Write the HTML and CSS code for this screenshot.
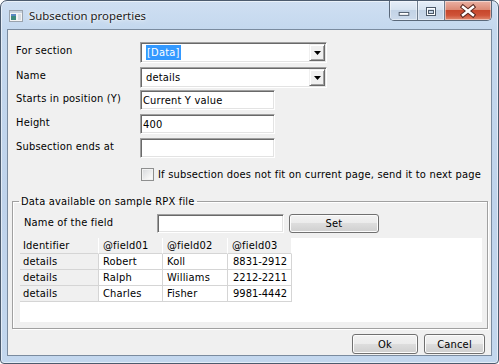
FILE: index.html
```html
<!DOCTYPE html>
<html>
<head>
<meta charset="utf-8">
<link rel="stylesheet" href="styles.css">
</head>
<body>
<div class="window">
  <div class="titlebar">
    <div class="title">
      <svg class="appicon" width="16" height="16" viewBox="0 0 16 16">
        <rect x="1.5" y="2.5" width="13" height="11" fill="#f4f4f4" stroke="#9aa3ad"/>
        <rect x="2" y="3" width="12" height="2" fill="#c9d3de"/>
        <rect x="3" y="6" width="5" height="6" fill="#3d8a7c"/>
        <rect x="3" y="6" width="5" height="2" fill="#5a88c4"/>
        <rect x="10" y="6" width="3" height="6" fill="#d7dde3"/>
      </svg>
      <span class="title-text">Subsection properties</span>
    </div>
    <div class="caption-btns">
      <div class="cbtn cmin">
        <svg width="28" height="18" viewBox="0 0 28 18"><rect x="9.5" y="10.5" width="10" height="3" fill="#fff" stroke="#4b5868"/></svg>
      </div>
      <div class="cbtn cmax">
        <svg width="26" height="18" viewBox="0 0 26 18"><rect x="8.5" y="5.5" width="9" height="8" fill="none" stroke="#4b5868" stroke-width="1"/><rect x="9.5" y="6.5" width="7" height="6" fill="none" stroke="#fff"/><rect x="10.5" y="8.5" width="5" height="3" fill="none" stroke="#4b5868"/></svg>
      </div>
      <div class="cbtn cclose">
        <svg width="46" height="18" viewBox="0 0 46 18"><path d="M18 5 L28 13 M28 5 L18 13" stroke="#5b2a22" stroke-width="4.5" stroke-linecap="square"/><path d="M18 5 L28 13 M28 5 L18 13" stroke="#fff" stroke-width="2.4" stroke-linecap="square"/></svg>
      </div>
    </div>
  </div>
  <div class="client">
    <div class="form">
      <div class="row row-combo">
        <span class="lbl">For section</span>
        <div class="combo"><span class="combo-text"><span class="sel">[Data]</span></span><span class="drop"><svg width="7" height="4" viewBox="0 0 7 4"><path d="M0 0 H7 L3.5 4 Z" fill="#000"/></svg></span></div>
      </div>
      <div class="row row-combo gap4">
        <span class="lbl">Name</span>
        <div class="combo"><span class="combo-text">details</span><span class="drop"><svg width="7" height="4" viewBox="0 0 7 4"><path d="M0 0 H7 L3.5 4 Z" fill="#000"/></svg></span></div>
      </div>
      <div class="row row-text gap2">
        <span class="lbl">Starts in position (Y)</span>
        <div class="textbox">Current Y value</div>
      </div>
      <div class="row row-text gap4">
        <span class="lbl">Height</span>
        <div class="textbox">400</div>
      </div>
      <div class="row row-text gap4">
        <span class="lbl">Subsection ends at</span>
        <div class="textbox"></div>
      </div>
    </div>
    <div class="check-row">
      <span class="checkbox"></span>
      <span class="check-label">If subsection does not fit on current page, send it to next page</span>
    </div>
    <fieldset class="group">
      <legend>Data available on sample RPX file</legend>
      <div class="field-row">
        <span class="field-lbl">Name of the field</span>
        <div class="textbox field-box"></div>
        <div class="btn set-btn">Set</div>
      </div>
      <div class="gridwrap">
        <table class="grid">
          <tr class="hdr"><td class="c1">Identifier</td><td class="c2">@field01</td><td class="c3">@field02</td><td class="c4">@field03</td></tr>
          <tr><td class="c1 rowhdr">details</td><td class="c2">Robert</td><td class="c3">Koll</td><td class="c4 num">8831-2912</td></tr>
          <tr><td class="c1 rowhdr">details</td><td class="c2">Ralph</td><td class="c3">Williams</td><td class="c4 num">2212-2211</td></tr>
          <tr><td class="c1 rowhdr">details</td><td class="c2">Charles</td><td class="c3">Fisher</td><td class="c4 num">9981-4442</td></tr>
        </table>
      </div>
    </fieldset>
    <div class="buttons">
      <div class="btn ok-btn">Ok</div>
      <div class="btn cancel-btn">Cancel</div>
    </div>
  </div>
</div>
</body>
</html>
```
FILE: styles.css
```css
html, body {
  margin: 0;
  padding: 0;
  width: 499px;
  height: 364px;
  overflow: hidden;
  background: #ffffff;
}

.window {
  box-sizing: border-box;
  width: 499px;
  height: 364px;
  border: 1px solid #4c5b6e;
  border-radius: 7px 7px 4px 4px;
  background: linear-gradient(to bottom, #cfdff2 0px, #c4d8ee 28px, #bfd3eb 200px, #c3d7ee 100%);
  box-shadow: inset 0 0 0 1px rgba(255, 255, 255, 0.55);
  padding: 0 6px 7px 6px;
  display: flex;
  flex-direction: column;
  font-family: "DejaVu Sans Condensed", "DejaVu Sans", sans-serif;
  font-size: 11px;
  letter-spacing: 0.2px;
  color: #000;
}

.titlebar {
  height: 28px;
  margin: 0 -6px;
  padding: 0 6px 0 7px;
  display: flex;
  justify-content: space-between;
  align-items: flex-start;
  flex: none;
}

.title {
  display: flex;
  align-items: center;
  height: 28px;
}

.appicon {
  display: block;
  margin-top: 1px;
}

.title-text {
  margin-left: 5px;
  font-family: "Noto Sans", "Open Sans", sans-serif;
  font-size: 11.4px;
  letter-spacing: 0;
  color: #1b1b1b;
  text-shadow: 0 0 6px rgba(255, 255, 255, 0.95), 0 0 2px rgba(255, 255, 255, 0.9);
  margin-top: 1px;
}

.caption-btns {
  display: flex;
  height: 20px;
  box-sizing: border-box;
  border: 1px solid #5a687a;
  border-top: none;
  border-radius: 0 0 5px 5px;
  overflow: hidden;
}

.cbtn {
  height: 19px;
  display: flex;
  align-items: center;
  justify-content: center;
  box-shadow: inset 0 0 0 1px rgba(255, 255, 255, 0.45);
}

.cbtn svg { display: block; }

.cmin {
  width: 27px;
  border-right: 1px solid #6e7c8d;
  background: linear-gradient(to bottom, #e6eef8 0%, #d7e3f0 45%, #c3d3e6 50%, #ccdaeb 100%);
}

.cmax {
  width: 26px;
  border-right: 1px solid #6e7c8d;
  background: linear-gradient(to bottom, #e6eef8 0%, #d7e3f0 45%, #c3d3e6 50%, #ccdaeb 100%);
}

.cclose {
  width: 46px;
  background: linear-gradient(to bottom, #eab1a4 0%, #dc8b76 45%, #c7472c 50%, #cf5237 75%, #e08a70 100%);
}

.client {
  flex: 1;
  box-sizing: border-box;
  border: 1px solid #7a8b9f;
  background: #f0f0f0;
  display: flex;
  flex-direction: column;
  padding-bottom: 1px;
}

.form {
  padding: 12px 0 0 8px;
  display: flex;
  flex-direction: column;
}

.row {
  display: flex;
  align-items: center;
}

.row-combo { height: 21px; }
.row-text { height: 20px; }
.gap4 { margin-top: 4px; }
.gap2 { margin-top: 2px; }

.lbl {
  width: 124px;
  flex: none;
  margin-top: -4px;
}

.combo {
  box-sizing: border-box;
  width: 187px;
  height: 21px;
  border: 1px solid;
  border-color: #a0a0a0 #ffffff #ffffff #a0a0a0;
  box-shadow: inset 1px 1px 0 #696969, inset -1px -1px 0 #e3e3e3;
  background: #fff;
  padding: 1px;
  display: flex;
  align-items: center;
}

.combo-text {
  flex: 1;
  padding-left: 4px;
}

.sel {
  background: #3399ff;
  color: #fff;
  padding: 1px 1px 1px 1px;
}

.drop {
  box-sizing: border-box;
  width: 16px;
  height: 17px;
  background: #f0f0f0;
  border: 1px solid;
  border-color: #f0f0f0 #696969 #696969 #f0f0f0;
  box-shadow: inset 1px 1px 0 #ffffff, inset -1px -1px 0 #a0a0a0;
  display: flex;
  align-items: center;
  justify-content: center;
}

.drop svg { display: block; margin-top: 1px; }

.textbox {
  box-sizing: border-box;
  width: 135px;
  height: 20px;
  border: 1px solid;
  border-color: #a0a0a0 #ffffff #ffffff #a0a0a0;
  box-shadow: inset 1px 1px 0 #696969, inset -1px -1px 0 #e3e3e3;
  background: #fff;
  padding: 1px 1px 1px 2px;
  display: flex;
  align-items: center;
}

.check-row {
  display: flex;
  align-items: center;
  margin: 10px 0 0 133px;
  height: 13px;
}

.checkbox {
  box-sizing: border-box;
  width: 13px;
  height: 13px;
  border: 1px solid #8e8f8f;
  background: linear-gradient(135deg, #d6d8db 0%, #f4f4f4 70%, #ffffff 100%);
  box-shadow: inset 0 0 0 1px #f2f2f2;
  flex: none;
}

.check-label {
  margin-left: 4px;
}

.group {
  margin: 14px 3px 0 4px;
  padding: 0 5px 6px 7px;
  border: 1px solid #a0a0a0;
  box-shadow: inset 1px 1px 0 #ffffff, 1px 1px 0 #ffffff;
  min-width: 0;
}

.group legend {
  padding: 0 2px;
  margin-left: -1px;
  line-height: 13px;
  height: 13px;
}

.field-row {
  display: flex;
  align-items: center;
  height: 19px;
  margin-top: 6px;
}

.field-lbl {
  width: 133px;
  padding-left: 4px;
  flex: none;
  margin-top: -2px;
}

.field-box {
  width: 127px;
  height: 19px;
}

.btn {
  box-sizing: border-box;
  height: 20px;
  border: 1px solid #707070;
  border-radius: 3px;
  background: linear-gradient(to bottom, #f2f2f2 0%, #ebebeb 50%, #dddddd 50%, #cfcfcf 100%);
  box-shadow: inset 0 0 0 1px #fcfcfc;
  display: flex;
  align-items: center;
  justify-content: center;
}

.set-btn {
  width: 90px;
  height: 19px;
  margin-left: 5px;
}

.gridwrap {
  margin-top: 5px;
  height: 84px;
  background: #ffffff;
}

.grid {
  border-collapse: separate;
  border-spacing: 0;
  table-layout: fixed;
}

.grid td {
  box-sizing: border-box;
  height: 16px;
  padding: 0 3px;
  line-height: 15px;
  border-right: 1px solid #d5d5d5;
  border-bottom: 1px solid #d5d5d5;
  white-space: nowrap;
  background: #ffffff;
}

.grid .c1 { width: 79px; }
.grid .c2 { width: 64px; padding-left: 4px; }
.grid .c3 { width: 65px; padding-left: 4px; }
.grid .c4 { width: 64px; padding-left: 4px; }

.grid .hdr td {
  background: #f0f0f0;
  border-right-color: #ffffff;
  border-bottom-color: #d5d5d5;
}

.grid td.rowhdr {
  background: #f0f0f0;
}

.grid td.num {
  text-align: right;
  padding-right: 4px;
  letter-spacing: 0;
}

.buttons {
  margin-top: auto;
  display: flex;
  justify-content: flex-end;
  padding-right: 6px;
}

.ok-btn {
  width: 66px;
}

.cancel-btn {
  width: 61px;
  margin-left: 6px;
}
```
